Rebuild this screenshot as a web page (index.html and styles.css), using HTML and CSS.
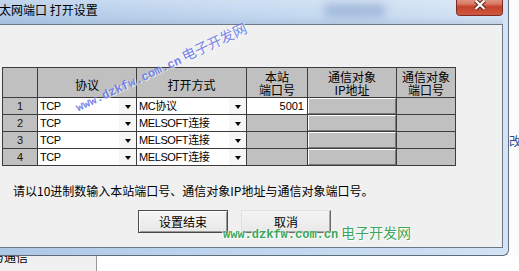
FILE: index.html
```html
<!DOCTYPE html>
<html lang="zh-CN">

  <head>
    <meta charset="UTF-8">
    <meta name="viewport" content="width=device-width, initial-scale=1.0">
    <title>以太网端口 打开设置</title>
    <link rel="stylesheet" href="styles.css">
  </head>

  <body>
    <div class="screen">
      <div class="window">
        <div class="titlebar">
          <span class="title">太网端口 打开设置</span>
          <div class="title-blur"></div>
          <div class="close-btn">
            <svg width="47" height="16" viewBox="0 0 47 16">
              <defs>
                <linearGradient id="closeGrad" x1="0" y1="0" x2="0" y2="1">
                  <stop offset="0" stop-color="#e8aa9c" />
                  <stop offset="0.4" stop-color="#d97a66" />
                  <stop offset="0.55" stop-color="#c5432d" />
                  <stop offset="1" stop-color="#cf5a42" />
                </linearGradient>
              </defs>
              <rect x="0.5" y="-4" width="46" height="19.5" rx="3" fill="url(#closeGrad)" stroke="#7d2c22" />
              <path d="M19.5 0.5 L28.5 9 M28.5 0.5 L19.5 9" stroke="#5b1e17" stroke-width="4" />
              <path d="M19.5 0.5 L28.5 9 M28.5 0.5 L19.5 9" stroke="#ffffff" stroke-width="2.2" />
            </svg>
          </div>
        </div>

        <div class="client">
          <div class="grid">
            <div class="th"></div>
            <div class="th th-one">协议</div>
            <div class="th th-one">打开方式</div>
            <div class="th">本站<br>端口号</div>
            <div class="th">通信对象<br>IP地址</div>
            <div class="th">通信对象<br>端口号</div>

            <div class="num">1</div>
            <div class="combo"><span class="combo-text">TCP</span><span class="combo-arrow"></span></div>
            <div class="combo"><span class="combo-text">MC协议</span><span class="combo-arrow"></span></div>
            <div class="port">5001</div>
            <div class="raised"></div>
            <div class="gray"></div>

            <div class="num">2</div>
            <div class="combo"><span class="combo-text">TCP</span><span class="combo-arrow"></span></div>
            <div class="combo"><span class="combo-text">MELSOFT连接</span><span class="combo-arrow"></span></div>
            <div class="gray"></div>
            <div class="raised"></div>
            <div class="gray"></div>

            <div class="num">3</div>
            <div class="combo"><span class="combo-text">TCP</span><span class="combo-arrow"></span></div>
            <div class="combo"><span class="combo-text">MELSOFT连接</span><span class="combo-arrow"></span></div>
            <div class="gray"></div>
            <div class="raised"></div>
            <div class="gray"></div>

            <div class="num">4</div>
            <div class="combo"><span class="combo-text">TCP</span><span class="combo-arrow"></span></div>
            <div class="combo"><span class="combo-text">MELSOFT连接</span><span class="combo-arrow"></span></div>
            <div class="gray"></div>
            <div class="raised"></div>
            <div class="gray"></div>
          </div>

          <p class="hint">请以10进制数输入本站端口号、通信对象IP地址与通信对象端口号。</p>

          <div class="buttons">
            <button class="btn btn-default">设置结束</button>
            <button class="btn">取消</button>
          </div>
        </div>
      </div>

      <div class="outside">
        <span class="behind-text">改</span>
      </div>
    </div>

    <div class="app-strip">
      <div class="app-left"><span>与通信</span></div>
      <div class="app-right"></div>
    </div>

    <!-- 水印 -->
    <div class="wm wm-blue"><span class="wm-url">www.dzkfw.com.cn</span> <span class="wm-cn">电子开发网</span></div>
    <div class="wm wm-green"><span class="wm-url">www.dzkfw.com.cn</span> <span class="wm-cn">电子开发网</span></div>
  </body>

</html>
```

FILE: styles.css
```css
* {
  box-sizing: border-box;
}

body {
  margin: 0;
  width: 519px;
  height: 271px;
  overflow: hidden;
  position: relative;
  background: #ffffff;
  color: #000;
  font-family: "Noto Sans CJK SC", "Noto Sans", sans-serif;
  font-size: 12px;
}

.screen {
  display: flex;
  height: 256px;
}

/* 窗口外框 */
.window {
  width: 509px;
  display: flex;
  flex-direction: column;
  padding: 0 5px 7px 0;
  border-right: 1px solid #5f6c7a;
  border-bottom: 1px solid #5f6c7a;
  border-bottom-right-radius: 6px;
  background: linear-gradient(90deg, #adc7e6 0%, #bfd5ee 45%, #c9dcf1 80%, #d4e4f5 100%);
}

.titlebar {
  height: 24px;
  display: flex;
  align-items: flex-start;
  position: relative;
  background: linear-gradient(180deg, rgba(255, 255, 255, 0.25) 0%, rgba(255, 255, 255, 0) 70%, rgba(140, 160, 185, 0.25) 100%);
}

.title {
  margin: 2px 0 0 -1px;
  line-height: 16px;
  font-size: 12px;
  color: #000;
  white-space: pre;
}

.title-blur {
  position: absolute;
  left: 325px;
  top: 4px;
  width: 60px;
  height: 13px;
  background: rgba(110, 140, 190, 0.45);
  filter: blur(5px);
}

.close-btn {
  margin-left: auto;
  width: 47px;
  height: 16px;
}

.close-btn svg {
  display: block;
}

.client {
  flex: 1;
  background: #f0f0f0;
  border-top: 1px solid #6d7885;
  border-right: 1px solid #6d7885;
  border-bottom: 1px solid #6d7885;
}

/* 表格 */
.grid {
  display: grid;
  grid-template-columns: 34px 98px 109px 60px 88px 58px;
  grid-template-rows: 29px repeat(4, 16px);
  gap: 1px;
  padding: 1px;
  width: max-content;
  margin: 42px 0 0 2px;
  background: #3c3c3c;
}

.th {
  background: #c0c0c0;
  display: flex;
  align-items: center;
  justify-content: center;
  text-align: center;
  line-height: 13px;
  font-size: 12px;
}

.th-one {
  padding-top: 3px;
}

.num {
  background: #c0c0c0;
  text-align: center;
  font-family: "Liberation Sans", sans-serif;
  font-size: 11px;
  line-height: 16px;
  color: #201000;
}

.combo {
  background: #fff;
  display: flex;
  align-items: center;
}

.combo-text {
  flex: 1;
  padding-left: 2px;
  font-family: "Liberation Sans", "Noto Sans CJK SC", sans-serif;
  font-size: 11px;
  letter-spacing: -0.4px;
  line-height: 16px;
  white-space: nowrap;
  overflow: hidden;
}

.combo-arrow {
  width: 17px;
  height: 16px;
  background: #f6f6f6;
  display: flex;
  align-items: center;
  justify-content: center;
}

.combo-arrow::after {
  content: "";
  margin-top: 1px;
  border-left: 3px solid transparent;
  border-right: 3px solid transparent;
  border-top: 4px solid #000;
}

.port {
  background: #fff;
  text-align: right;
  padding-right: 3px;
  font-family: "Liberation Sans", sans-serif;
  font-size: 11px;
  line-height: 16px;
}

.raised {
  background: #c0c0c0;
  border: 1px solid;
  border-color: #ffffff #7a7a7a #7a7a7a #ffffff;
}

.gray {
  background: #c0c0c0;
}

.hint {
  margin: 17px 0 0 13px;
  line-height: 16px;
  font-size: 12px;
}

.buttons {
  display: flex;
  gap: 13px;
  margin: 11px 0 0 138px;
}

.btn {
  width: 90px;
  height: 23px;
  padding: 0;
  font-family: "Noto Sans CJK SC", sans-serif;
  font-size: 12px;
  color: #000;
  background: linear-gradient(180deg, #f4f4f4, #e8e8e8);
  border: 1px solid;
  border-color: #e0e0e0 #6a6a6a #6a6a6a #e0e0e0;
  box-shadow: inset -1px -1px #a8a8a8;
}

.btn-default {
  border: 1px solid #4a4a4a;
  box-shadow: inset 1px 1px #ffffff, inset -1px -1px #9a9a9a;
}

/* 背后的程序 */
.outside {
  flex: 1;
  background: #fbfbfb;
  overflow: hidden;
  padding-top: 134px;
}

.behind-text {
  display: block;
  line-height: 14px;
  color: #2c4b94;
}

.app-strip {
  display: flex;
  height: 15px;
}

.app-left {
  width: 97px;
  background: #f0f0f0;
  border-right: 1px solid #9a9a9a;
  overflow: hidden;
}

.app-left span {
  display: block;
  margin: -6px 0 0 -8px;
  line-height: 14px;
  white-space: nowrap;
}

.app-right {
  flex: 1;
  background: #ffffff;
}

/* 水印 */
.wm {
  position: absolute;
  line-height: 16px;
  white-space: nowrap;
}

.wm-url {
  font-family: "Liberation Mono", monospace;
  font-size: 12px;
  font-weight: bold;
}

.wm-cn {
  font-size: 14px;
}

.wm-blue {
  left: 76px;
  top: 98px;
  color: rgba(95, 110, 230, 0.85);
  text-shadow: 1px 1px 1px rgba(255, 255, 255, 0.9);
  transform-origin: left center;
  transform: rotate(-25deg);
}

.wm-green {
  left: 223px;
  top: 224px;
  color: #3aa85c;
  text-shadow: 1px 1px 1px #ffffff, -1px 0 1px #ffffff;
}
```
